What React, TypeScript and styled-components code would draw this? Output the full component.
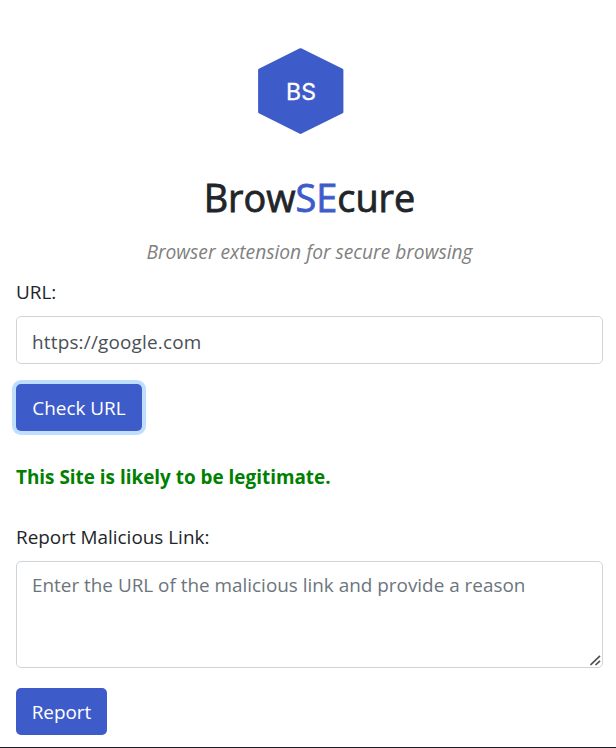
import React from "react";
import styled, { createGlobalStyle } from "styled-components";

const GlobalStyle = createGlobalStyle`
  *, *::before, *::after { box-sizing: border-box; }
  body {
    margin: 0;
    background: #fff;
    color: #212529;
    font-family: "Open Sans", "Noto Sans", sans-serif;
    font-size: 18.9px;
    line-height: 30px;
    overflow: hidden;
  }
`;

const Popup = styled.main`
  width: 616px;
  height: 748px;
  padding: 48px 13px 0 16px;
  border-bottom: 1px solid #1f1d29;
  display: flex;
  flex-direction: column;
  align-items: flex-start;
`;

const Logo = styled.svg`
  display: block;
  width: 86px;
  height: 86px;
  margin-left: 242px;
`;

const Title = styled.h1`
  align-self: center;
  margin: 40px 0 0;
  font-size: 37.8px;
  font-weight: 500;
  line-height: 48px;
  -webkit-text-stroke: 0.8px currentColor;
  white-space: nowrap;
`;

const Accent = styled.span`
  color: #3e5cc9;
`;

const Tagline = styled.p`
  align-self: center;
  margin: 15px 0 0;
  color: #808080;
  font-size: 19.2px;
  font-style: italic;
  white-space: nowrap;
`;

const Label = styled.label<{ $top: number }>`
  margin-top: ${(p) => p.$top}px;
  white-space: nowrap;
`;

const UrlInput = styled.input`
  width: 100%;
  height: 48px;
  margin: 9px 0 20px;
  padding: 3px 15px 0;
  border: 1px solid #ced4da;
  border-radius: 5px;
  color: #495057;
  background: #fff;
  font: inherit;
  letter-spacing: 0.2px;
  outline: none;
`;

const Button = styled.button<{ $width: number; $focused?: boolean }>`
  width: ${(p) => p.$width}px;
  height: 47px;
  padding: 1px 0 0;
  border: 0;
  border-radius: 5px;
  background: #3e5cc9;
  color: #fff;
  font: inherit;
  white-space: nowrap;
  box-shadow: ${(p) => (p.$focused ? "0 0 0 4px #bfdeff" : "none")};
`;

const Verdict = styled.strong`
  margin-top: 31px;
  color: #008000;
  font-weight: 700;
  white-space: nowrap;
`;

const ReportField = styled.div`
  position: relative;
  width: 100%;
  height: 107px;
  margin: 9px 0 20px;
`;

const ReportText = styled.textarea`
  display: block;
  width: 100%;
  height: 100%;
  padding: 8px 15px;
  border: 1px solid #ced4da;
  border-radius: 5px;
  background: #fff;
  font: inherit;
  resize: none;
  outline: none;
  overflow: hidden;
  &::placeholder {
    color: #6c757d;
    opacity: 1;
  }
`;

const Grip = styled.svg`
  position: absolute;
  right: 2px;
  bottom: 2px;
  width: 11px;
  height: 11px;
  pointer-events: none;
`;

export default function App() {
  return (
    <>
      <GlobalStyle />
      <Popup>
        <Logo viewBox="0 0 86 86" aria-label="BS">
          <path
            d="M42.500 1.600 L84 22 V64 L42.500 84.600 L1.500 64 V22 Z"
            fill="#3e5cc9"
            stroke="#3e5cc9"
            strokeWidth="2.800"
            strokeLinejoin="round"
          />
          <text x="43" y="51.500" textAnchor="middle" fill="#fff" stroke="#fff" strokeWidth="0.3" fontFamily="Inter" fontSize="23">
            BS
          </text>
        </Logo>
        <Title>
          Brow<Accent>SE</Accent>cure
        </Title>
        <Tagline>Browser extension for secure browsing</Tagline>
        <Label $top={10} htmlFor="url">URL:</Label>
        <UrlInput id="url" defaultValue="https://google.com" />
        <Button $width={126} $focused>Check URL</Button>
        <Verdict>This Site is likely to be legitimate.</Verdict>
        <Label $top={30} htmlFor="report">Report Malicious Link:</Label>
        <ReportField>
          <ReportText id="report" placeholder="Enter the URL of the malicious link and provide a reason" />
          <Grip viewBox="0 0 11 11" stroke="#505050" strokeWidth="1.700" fill="none">
            <path d="M0.500 10 L10 0.800 M5.500 10 L10 5.800" />
          </Grip>
        </ReportField>
        <Button $width={91}>Report</Button>
      </Popup>
    </>
  );
}
